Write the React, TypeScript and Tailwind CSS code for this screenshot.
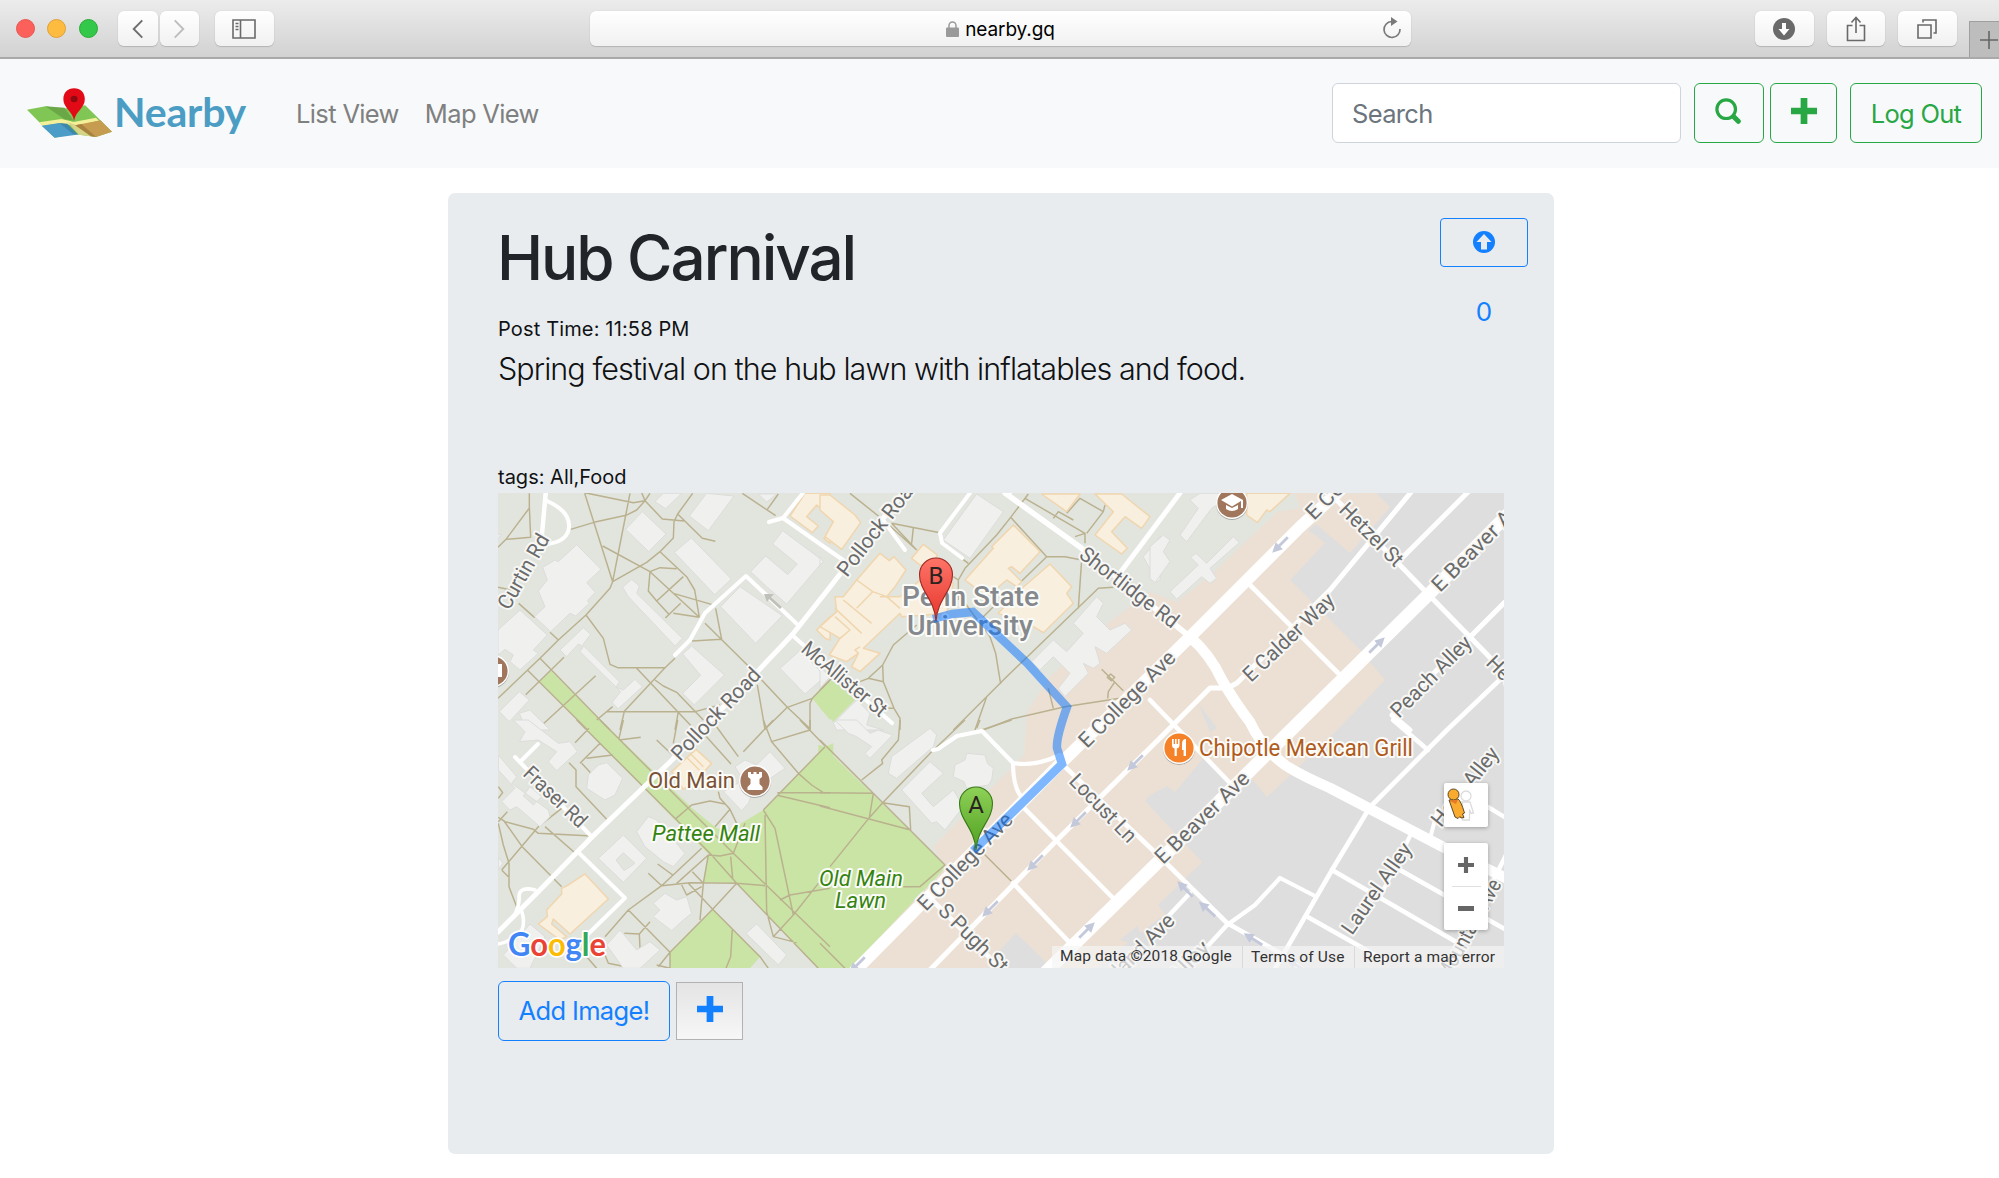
import React from "react";

type Pt = [number, number];

/* Map artwork is authored in 340x250 tiles at three units per pixel. */
const TILES: Record<string, Pt> = {
  nw: [490, 480],
  n: [820, 480],
  ne: [1150, 480],
  sw: [490, 720],
  s: [820, 720],
  se: [1150, 720],
};

const FOOTPATHS: [string, string][] = [
  ["nw", "M118 40L118 80L122 172L48 178L24 202M118 84L48 178M284 40L368 305M420 40L368 305M284 38L430 68L465 62L455 38M242 148L312 127L408 106L440 90L465 62L480 40M465 62L517 117L582 123M608 40L563 102L552 125L550 174L510 215L470 247L368 305L360 325L288 405L205 480L150 535L24 655M563 102L637 175L676 184M510 215L590 290L614 330L628 412M338 198L480 275L628 412M480 275L510 263L560 266M480 275L475 333L500 363L536 402M550 400L628 412M580 290L500 363M550 340L667 374M572 370L526 414M677 385L695 478L606 483M645 430L775 558M288 405L340 475L360 553L383 563L525 563M555 535L525 563L403 694L390 750M440 565L615 750M495 600L520 618L560 637L640 720M350 695L615 695L690 675M565 695L555 750M24 322L62 330M86 370L134 413M180 457L205 480M112 570L293 750M150 535L360 750M222 532L107 644M317 587L162 730M368 680L320 720M802 615L825 748L892 682L815 600M892 682L962 748M892 682L967 655L1020 600M967 655L960 670L960 750M757 40L857 107M865 42L832 88"],
  ["n", "M90 40L190 120L290 210M215 130L360 158M215 130L290 210M280 143L275 190M625 42L572 112L530 165L435 265L415 300L415 360M400 290L415 300M572 112L680 230L605 303M680 230L735 230L785 240L775 385M880 322L835 325L560 590L400 750M415 340L450 390L510 470L527 520L542 612M500 650L465 750M845 568L910 632M885 605L865 635L863 655M872 582L862 592L874 602L884 592ZM495 748L575 717L735 680L900 655M685 625L700 685M290 435L220 495L188 555L190 605L222 685L240 715L240 750M188 555L145 595M120 605L145 595L190 605M200 685L222 685M0 630L40 590M615 55L795 160L795 190M740 100L780 55L850 95L800 160M855 75L850 95M700 115L715 95L760 120M550 350L490 410M425 235L445 250M765 170L795 160"],
  ["sw", "M330 0L730 400L1020 680M260 0L660 400L740 490L985 745M387 55L400 0M387 60L452 52M297 25L255 68M330 70L270 130M290 115L368 105M237 128L258 150L258 200L350 298M275 130L303 160M500 60L545 103M550 70L563 0M640 40L723 132M665 0L745 110M850 0L760 95M820 0L845 65L960 30L960 0M930 0L1005 78M845 65L925 160L965 195L1000 218M1005 80L820 270M862 218L1020 218M862 226L1020 263M820 270L855 325L910 585M825 285L830 575L850 650L920 668M655 405L640 490L630 600M515 497L600 488L740 490L825 497M635 385L515 497L415 570L345 650M503 432L548 465M475 460L515 497M655 405L560 490M415 570L540 697L540 745L500 735M540 697L668 568L740 490M540 697L505 740M668 568L595 490M668 568L810 710L835 745M727 625L722 710L708 745M607 455L640 490M575 495L590 525L635 500M910 585L985 490M870 540L900 525L1020 505M910 585L850 650M655 405L690 408L730 400L765 310M722 410L728 475M555 298L605 255L660 243L705 252M685 215L690 235L720 268L675 320M720 268L740 310M25 292L45 305L130 328L145 340L305 348M52 275L25 305M25 310L40 375L57 430L57 500L80 560M215 265L145 320L35 450M40 300L98 382L215 500M165 320L262 405M25 200L38 218L25 235M35 450L55 470M403 640L448 642L480 605M448 642L450 685M345 705L355 730L395 738M290 710L320 745"],
  ["s", "M435 0L335 95L188 248L148 293L30 440M240 0L235 60L185 120L188 130L125 180M0 60L375 435L300 500L250 500M0 218L160 220L148 293M0 258L272 330L268 260L188 248M480 0L470 25M485 30L575 0M490 400L580 490M0 670L75 745"],
];

const LAWNS: [string, string][] = [
  ["nw", "M150 605L183 572L365 755L300 757ZM967 655L1020 600L1020 720Z"],
  ["n", "M0 640L40 595L105 660L40 725L0 685Z"],
  ["sw", "M255 -5L325 -5L610 268L680 325L720 330L820 270L1005 80L1030 70L1020 745L985 745L740 490L640 485L655 402ZM668 568L810 710L780 745L540 745L540 697Z"],
  ["s", "M0 75L14 82L375 435L370 450L90 745L-5 745L-5 75Z"],
];

const BUILDINGS: [string, string][] = [
  ["nw", "M457 95L528 162L476 215L407 148ZM495 65L520 40L575 40L527 86ZM650 40L732 48L655 152L598 108ZM604 174L724 297L674 344L553 217ZM260 194L333 268L290 308L316 337L292 362L298 370L257 408L240 400L182 455L134 410L165 380L145 333L172 300L158 262L195 240L205 245ZM90 390L172 465L130 510L145 520L90 570L60 545L70 525L45 508L24 525L24 450ZM398 322L425 298L448 318L440 340L577 475L555 498L415 350ZM210 510L280 443L302 463L278 495L388 605L378 622L400 630L435 598L457 620L385 686L366 668L392 635L270 515L280 500L265 492L230 530ZM878 152L1000 243L890 372L830 320L782 275L827 228L893 284L922 252L848 192ZM750 320L877 407L797 490L692 380ZM605 498L703 585L613 675L578 640L632 586L578 522ZM932 510L1005 590L945 642L870 565ZM88 635L118 660L58 725L28 695ZM88 700L120 690L180 750L110 750ZM805 42L860 42L830 66ZM20 165L34 162L22 180Z"],
  ["n", "M470 42L550 95L450 235L370 180ZM830 350L850 370L830 410L870 450L915 430L935 450L860 520L825 500L840 550L820 565L790 550L805 580L735 650L715 625L750 580L700 530L660 570L635 545L700 480L740 515L790 460L760 430ZM1020 170L970 230L1010 305L1020 300ZM0 560L30 590L0 625ZM40 730L110 660L150 700L140 735L190 750L50 750ZM0 230L10 245L0 255Z"],
  ["ne", "M120 60L150 40L215 40L200 75L185 85L110 185L90 165L145 85ZM250 170L268 188L180 265L200 295L180 310L155 290L80 358L60 335L145 255L122 232L138 220L170 250ZM0 200L40 165L60 180L40 215L60 245L15 308L0 295Z"],
  ["sw", "M115 0L205 70L240 65L262 95L200 152L175 125L200 95L145 60L88 65L105 35L70 0ZM350 128L398 175L375 225L345 240L290 205L295 165L325 135ZM25 105L80 170L65 190L175 270L180 290L150 320L80 260L60 270L35 245L75 205L25 150ZM120 200L100 228L130 255L155 230ZM475 290L500 300L585 400L550 440L520 425L465 380L440 335ZM400 345L470 415L400 487L325 415ZM400 398L378 420L402 452L435 430ZM525 520L560 540L590 530L605 580L580 600L545 632L490 590L510 570L490 550ZM390 630L440 690L480 665L510 690L450 745L400 745L350 675ZM120 612L165 650L120 745L80 745L40 705ZM800 612L890 705L865 735L768 640ZM840 95L885 145L790 210L775 250L755 272L700 215L760 180L735 140L765 120L800 135ZM25 410L38 430L25 450Z"],
  ["s", "M45 0L110 0L150 40L175 30L218 45L150 115L135 100L155 80L110 50L85 40ZM330 25L350 45L340 80L230 175L205 160L215 110ZM330 125L370 160L305 220L340 260L400 210L430 260L375 330L350 305L335 310L245 210ZM440 100L495 105L502 130L520 145L515 180L505 195L440 205L432 185L400 170L405 135L435 120Z"],
];

const HALLS: [string, string][] = [
  ["nw", "M945 40L1020 40L1020 108L980 75L950 110L985 138L967 158L900 108ZM1020 160L1002 175L1020 190ZM980 450L1020 410L1020 480L1005 475Z"],
  ["n", "M0 45L30 45L105 105L122 128L65 208L15 170L40 125L0 90ZM310 193L352 225L335 260L300 255L275 235ZM180 220L208 242L222 230L258 270L225 320L200 350L240 350L345 265L400 310L380 400L245 410L240 400L130 505L180 520L120 575L95 560L115 520L80 545L28 525L60 475L0 440L50 395L45 350L70 350L110 300ZM580 135L660 215L600 280L575 260L565 265L605 305L590 320L560 300L500 350L435 300L520 205L515 200ZM690 252L755 320L740 340L760 370L670 458L640 440L535 400L600 330ZM665 42L780 42L740 95ZM825 42L905 42L990 110L965 145L915 110L875 155L922 205L905 222L825 165L880 95Z"],
  ["ne", "M290 40L420 40L360 95L350 90L322 128L290 105Z"],
  ["sw", "M285 462L355 537L240 642L190 597L185 612L230 650L210 660L145 612L172 590L170 570L215 522L215 505L235 495ZM618 88L665 130L620 180L580 208L545 155Z"],
];

const HALL_LINES: [string, string][] = [
  ["n", "M110 300L158 335L200 350M180 350L200 350L240 385M70 360L155 430M45 385L125 460M60 475L90 450L45 410M158 335L110 385M120 500L105 510L115 520"],
  ["sw", "M600 100L640 140M590 112L630 152"],
];

/* [path, width] in page pixels */
const ROADS: [string, number][] = [
  ["M546 490L541 545", 4.5],
  ["M547 501Q570 511 569 527Q568 541 548 544", 4],
  ["M675 655L690 640L705 613L746 576L797 624", 4],
  ["M769 522L783 518L830 551L846 562", 4.2],
  ["M803 493L783 518", 4],
  ["M905 490L847 565L830 587L792 635L740 690L672 760L592 837L535 895L498 932", 5],
  ["M792 635L892 723", 4.2],
  ["M883 520L905 550", 4],
  ["M970 493L940 533L942 543L962 558", 4],
  ["M1005 493L1080 547L1190 637", 5.5],
  ["M1180 493L1120 573", 5],
  ["M1010 493L1000 487", 4],
  ["M578 852L625 898L585 937", 4],
  ["M515 757L592 837M538 744L520 762", 4],
  ["M535 890Q520 886 519 896Q520 905 514 916M522 912Q525 922 522 930Q512 942 498 944", 3.6],
  ["M1360 472L1300 527L1190 637L1061 763L850 976", 12],
  ["M1525 497L1430 593L1288 733L1150 870L1046 972", 13],
  ["M1190 637Q1210 654 1222 680Q1236 704 1250 722Q1262 748 1285 765Q1300 775 1330 788L1443 847L1510 880", 10.5],
  ["M1412 491L1330 590L1237 683L1228 688L1210 688L1160 738L1057 840L926 974", 5],
  ["M1330 493L1427 593L1470 637L1510 678", 5],
  ["M1469 491L1403 557", 5],
  ["M1510 597L1392 715L1410 730", 5],
  ["M1510 670L1447 730L1370 807L1332 870L1272 974", 4.6],
  ["M1393 720L1428 750", 4.6],
  ["M1248 583L1338 673", 4.6],
  ["M1150 700L1230 783", 4.6],
  ["M1061 763L1160 857L1227 923L1280 953L1306 972", 4.6],
  ["M1023 807L1113 898", 4.6],
  ["M1013 883L1070 943", 4.6],
  ["M930 898L1006 974", 4.6],
  ["M933 750L938 749L957 736L982 731L1013 763Q1035 767 1060 755M1013 763Q1013 785 1020 795", 4.2],
  ["M1332 870L1458 943", 4.6],
  ["M1227 925L1255 905L1280 878L1315 896", 4.2],
  ["M1306 916L1384 960", 4.6],
  ["M1400 870L1510 932", 4.6],
  ["M1410 836L1380 897M1431 835L1437 812", 4],
  ["M1488 807L1506 818", 4.4],
  ["M1506 855L1450 968", 4.4],
  ["M1190 893L1160 925M1227 925L1195 960", 4.4],
  ["M1488 868L1506 878", 6],
];

/* [x, y, heading in degrees] */
const ARROWS: [number, number, number][] = [
  [1280, 545, 135], [1377, 645, -45], [1135, 763, 135], [1078, 820, 135], [1035, 863, 135],
  [990, 909, 135], [1087, 930, -45], [857, 965, 135], [1185, 889, -135], [1207, 909, -138], [1253, 939, -148], [1296, 965, -148],
];

/* text, baseline start, baseline end */
const STREETS: [string, number, number, number, number][] = [
  ["Curtin Rd", 509, 611, 550, 539],
  ["Pollock Road", 680, 762, 762, 676],
  ["Pollock Road", 847, 578, 921, 483],
  ["McAllister St", 800, 651, 880, 718],
  ["Fraser Rd", 522, 775, 579, 829],
  ["Shortlidge Rd", 1078, 557, 1172, 629],
  ["E College Ave", 1314, 521, 1407, 428],
  ["Hetzel St", 1338, 511, 1395, 568],
  ["E Beaver Ave", 1440, 593, 1530, 503],
  ["E Calder Way", 1251, 683, 1336, 602],
  ["Peach Alley", 1399, 719, 1473, 644],
  ["Hetzel St", 1485, 664, 1542, 721],
  ["E College Ave", 1087, 749, 1177, 659],
  ["E College Ave", 926, 912, 1014, 821],
  ["Locust Ln", 1068, 782, 1128, 844],
  ["E Beaver Ave", 1163, 865, 1251, 780],
  ["S Pugh St", 937, 912, 1000, 974],
  ["Highland Ave", 1091, 1008, 1176, 922],
  ["Alley", 1177, 984, 1211, 949],
  ["Laurel Alley", 1352, 936, 1413, 849],
  ["Holly Alley", 1441, 828, 1500, 754],
  ["Mountain Ave", 1448, 982, 1502, 884],
];

function Tiles({ layers, fill = "none", stroke, width }: { layers: [string, string][]; fill?: string; stroke?: string; width?: number }) {
  return (
    <>
      {layers.map(([tile, d], i) => (
        <g key={i} transform={`translate(${TILES[tile][0]} ${TILES[tile][1]}) scale(0.33333)`}>
          <path d={d} fill={fill} stroke={stroke} strokeWidth={width} strokeLinejoin="round" fillRule="evenodd" />
        </g>
      ))}
    </>
  );
}

function Street({ item }: { item: [string, number, number, number, number] }) {
  const [text, x1, y1, x2, y2] = item;
  const angle = (Math.atan2(y2 - y1, x2 - x1) * 180) / Math.PI;
  const length = Math.hypot(x2 - x1, y2 - y1);
  return (
    <text
      transform={`translate(${x1} ${y1}) rotate(${angle})`}
      textLength={length}
      lengthAdjust="spacingAndGlyphs"
      fontSize="21"
      fill="#6b6b6b"
      stroke="#f7f7f5"
      strokeWidth="4"
      strokeLinejoin="round"
      paintOrder="stroke"
    >
      {text}
    </text>
  );
}

function Place({ x, y, w, size, fill, italic, bold, children }: { x: number; y: number; w: number; size: number; fill: string; italic?: boolean; bold?: boolean; children: string }) {
  return (
    <text x={x} y={y} textLength={w} lengthAdjust="spacingAndGlyphs" fontSize={size} fill={fill} fontStyle={italic ? "italic" : "normal"} fontWeight={bold ? 500 : 400} stroke="#fbfbf8" strokeWidth="4" strokeLinejoin="round" paintOrder="stroke">
      {children}
    </text>
  );
}

function Marker({ x, y, letter, from, to, edge }: { x: number; y: number; letter: string; from: string; to: string; edge: string }) {
  return (
    <g transform={`translate(${x} ${y})`}>
      <defs>
        <linearGradient id={`pin${letter}`} x1="0" y1="0" x2="0" y2="1">
          <stop offset="0" stopColor={from} />
          <stop offset="1" stopColor={to} />
        </linearGradient>
      </defs>
      <path d="M0 0C-1.5 -22 -16.5 -30 -16.5 -46.5A16.5 16.5 0 0 1 16.5 -46.5C16.5 -30 1.5 -22 0 0Z" fill={`url(#pin${letter})`} stroke={edge} strokeWidth="1.1" />
      <text x="0" y="-37" textAnchor="middle" fontSize="24" fill="#2b2320">{letter}</text>
    </g>
  );
}

function Poi({ x, y, fill, children }: { x: number; y: number; fill: string; children?: React.ReactNode }) {
  return (
    <g transform={`translate(${x} ${y})`}>
      <circle r="16" cy="1" fill="#000" opacity="0.25" />
      <circle r="16" fill="#fff" />
      <circle r="14.6" fill={fill} />
      {children}
    </g>
  );
}

function CampusMap() {
  return (
    <svg viewBox="498 493 1006 475" className="block h-full w-full font-['Roboto',sans-serif]">
      <rect x="498" y="493" width="1006" height="475" fill="#e2e4de" />
      <path d="M1293 490L1300 508L1277 512L1213 573L1177 602L1150 592L1103 627L1050 677L1027 712L1024 755L933 847L944 863L850 972L1506 972L1506 490Z" fill="#ece0d4" />
      <path d="M1373 490L1390 507L1350 553L1316 524L1308 530L1325 543L1290 580L1360 650L1385 680L1337 730L1267 797L1253 780L1230 783L1204 757L1175 792L1167 786L1150 795L1145 801L1202 862L1158 905L1165 914L1090 972L1506 972L1506 490Z" fill="#dedede" />
      <path d="M1016 933L1045 961L1045 972L990 972L1000 950ZM1137 926L1120 940L1150 950ZM1198 703L1217 728L1210 732Z" fill="#dedede" />
      <Tiles layers={LAWNS} fill="#cae4a5" />
      <Tiles layers={FOOTPATHS} stroke="#bab18f" width={4.4} />
      <Tiles layers={BUILDINGS} fill="#f0f0ef" stroke="#dcdddb" width={3} />
      <Tiles layers={HALLS} fill="#f8efde" stroke="#f0d6ae" width={4.5} />
      <Tiles layers={HALL_LINES} stroke="#f0d6ae" width={4.5} />
      {ROADS.map(([d, w], i) => (
        <path key={i} d={d} fill="none" stroke="#fff" strokeWidth={w} strokeLinejoin="round" strokeLinecap="round" />
      ))}
      {ARROWS.map(([x, y, a], i) => (
        <g key={i} transform={`translate(${x} ${y}) rotate(${a})`}>
          <path d="M-11 -1.4H1V-5L11 0L1 5V1.4H-11Z" fill="#c3c8da" />
        </g>
      ))}
      <path d="M764 594l3 8 2-3 11 10 2-2-11-10 3-3z" fill="#bfc0ba" />

      {STREETS.map((s, i) => (
        <Street key={i} item={s} />
      ))}
      <Place x={902} y={606} w={137} size={28} fill="#85898d" bold>Penn State</Place>
      <Place x={907} y={635} w={126} size={28} fill="#85898d" bold>University</Place>
      <Place x={648} y={788} w={87} size={22.5} fill="#7a5233">Old Main</Place>
      <Place x={652} y={841} w={108} size={22.5} fill="#34830f" italic>Pattee Mall</Place>
      <Place x={819} y={886} w={84} size={22.5} fill="#34830f" italic>Old Main</Place>
      <Place x={835} y={908} w={51} size={22.5} fill="#34830f" italic>Lawn</Place>
      <Place x={1199} y={756} w={214} size={23} fill="#b05a1c">Chipotle Mexican Grill</Place>

      <Poi x={1179} y={748} fill="#f58229">
        <path d="M-7-9v6q0 3 2.600 3.500V8h2.200V.5Q.5 0 .5-3v-6h-1.600v5h-1.300v-5h-1.600v5h-1.300v-5zM3-4q0-5 4-5V8H4.600V2H3z" fill="#fff" />
      </Poi>
      <Poi x={755} y={781} fill="#a0775c">
        <path d="M-7-9h3v2h2.500v-2h3v2H4v-2h3v5L4.500-2V3L7.500 6v3h-15V6l3-3v-5L-7-4z" fill="#fff" />
      </Poi>
      <Poi x={1232} y={503} fill="#a0775c">
        <path d="M-11-3L0-9L11-3V5H9V-2L0 3.500ZM-6 2L0 5L6 2V6Q0 10-6 6Z" fill="#fff" />
      </Poi>
      <Poi x={493} y={671} fill="#a0775c">
        <path d="M3-7h6V6H3z" fill="#fff" />
      </Poi>

      <path d="M933 619L952 614L973 612L1027 663L1067 707Q1056 738 1057 748L1062 764L973 851" fill="none" stroke="#0070ff" strokeOpacity="0.5" strokeWidth="8.500" />
      <Marker x={936} y={621} letter="B" from="#ff7468" to="#e5352c" edge="#9c2a22" />
      <Marker x={976} y={850} letter="A" from="#8fd158" to="#4ea020" edge="#3a7a17" />

      <text x="508" y="956" textLength="98" lengthAdjust="spacingAndGlyphs" fontSize="32" fontWeight="700" className="font-['Lato',sans-serif]" stroke="#fff" strokeWidth="3.500" strokeLinejoin="round" paintOrder="stroke">
        <tspan fill="#4285f4">G</tspan>
        <tspan fill="#ea4335">o</tspan>
        <tspan fill="#fbbc05">o</tspan>
        <tspan fill="#4285f4">g</tspan>
        <tspan fill="#34a853">l</tspan>
        <tspan fill="#ea4335">e</tspan>
      </text>
    </svg>
  );
}

function Plus({ className }: { className: string }) {
  return (
    <svg viewBox="0 0 24 24" className={className} fill="currentColor">
      <path d="M8.900 0h6.200v8.900H24v6.200h-8.900V24h-6.200v-8.900H0v-6.200h8.900z" />
    </svg>
  );
}

const chromeButton = "flex h-[35px] items-center justify-center rounded-[6px] bg-linear-to-b from-white to-[#f1f1f1] shadow-[0_1px_1px_#b4b4b4,0_0_1px_#bbb]";

function BrowserBar() {
  return (
    <div className="flex h-[59px] items-start border-b-2 border-[#a9a9a9] bg-linear-to-b from-[#ececed] to-[#d3d2d3] pt-[11px]">
      <div className="flex h-[35px] items-center gap-[12.500px] pl-[15.500px]">
        <span className="size-[19px] rounded-full border border-[#e9554f] bg-[#fc605b]" />
        <span className="size-[19px] rounded-full border border-[#dfa136] bg-[#fdbc40]" />
        <span className="size-[19px] rounded-full border border-[#27ac34] bg-[#34c84a]" />
      </div>
      <div className="ml-[20.500px] flex gap-[2px]">
        <div className={`${chromeButton} w-[39.500px]`}>
          <svg viewBox="0 0 14 22" className="h-[20px] w-[12px]" fill="none" stroke="#6d6d6d" strokeWidth="2.200"><path d="M12 1L2 11L12 21" /></svg>
        </div>
        <div className={`${chromeButton} w-[39.500px]`}>
          <svg viewBox="0 0 14 22" className="h-[20px] w-[12px]" fill="none" stroke="#bdbdbd" strokeWidth="2.200"><path d="M2 1L12 11L2 21" /></svg>
        </div>
      </div>
      <div className={`${chromeButton} ml-[16px] w-[58.500px]`}>
        <svg viewBox="0 0 24 20" className="h-[20px] w-[24px]" fill="none" stroke="#6a6a6a" strokeWidth="1.600"><path d="M1 1H23V19H1ZM8.500 1V19M3.500 4.500H6.500M3.500 7.500H6.500M3.500 10.500H6.500" /></svg>
      </div>
      <div className={`${chromeButton} relative ml-[316.500px] w-[821px] gap-[6px]`}>
        <svg viewBox="0 0 13 16" className="h-[16px] w-[13px]"><path d="M3 7V4.500a3.500 3.500 0 0 1 7 0V7" fill="none" stroke="#9a9a9a" strokeWidth="1.500" /><rect y="6.500" width="13" height="9.500" rx="1" fill="#9a9a9a" /></svg>
        <span className="pt-px text-[19px] leading-none tracking-[-0.100px] text-black">nearby.gq</span>
        <svg viewBox="0 0 20 24" className="absolute top-[5px] right-[9px] h-[24px] w-[20px]"><path d="M9.500 5.500A8 8 0 1 0 18 13" fill="none" stroke="#7a7a7a" strokeWidth="1.700" /><path d="M9 1L15.500 5.500L9 10Z" fill="#7a7a7a" /></svg>
      </div>
      <div className="ml-[344px] flex gap-[13px]">
        <div className={`${chromeButton} w-[58.500px]`}>
          <svg viewBox="0 0 22 22" className="size-[22px]"><circle cx="11" cy="11" r="11" fill="#6a6a6a" /><path d="M9 5h4v6h3.500L11 17.500L5.500 11H9z" fill="#fff" /></svg>
        </div>
        <div className={`${chromeButton} w-[58.500px]`}>
          <svg viewBox="0 0 20 26" className="h-[26px] w-[20px]" fill="none" stroke="#6a6a6a" strokeWidth="1.600"><path d="M6.500 9.500H1.500V24.500H18.500V9.500H13.500M10 17V2M5.500 6.500L10 1.500L14.500 6.500" /></svg>
        </div>
        <div className={`${chromeButton} w-[58.500px]`}>
          <svg viewBox="0 0 20 20" className="size-[20px]" fill="none" stroke="#6a6a6a" strokeWidth="1.600"><path d="M1 6H14V19H1ZM6 3.500V1H19V14H16.500" /></svg>
        </div>
      </div>
      <div className="mt-[10px] ml-auto flex h-[36px] w-[30px] items-center justify-end border-t border-l border-[#9f9f9f] bg-[#bdbdbe]">
        <svg viewBox="0 0 18 18" className="mr-[1px] size-[18px] shrink-0" stroke="#666" strokeWidth="1.600"><path d="M9 0V18M0 9H18" /></svg>
      </div>
    </div>
  );
}

function Logo() {
  return (
    <div className="flex items-center">
      <svg viewBox="70 264 222 150" preserveAspectRatio="none" className="h-[50px] w-[85px]">
        <path d="M70 329L118 319L160 327L222 316L292 395L250 411L192 402L142 413Z" fill="#80c655" />
        <path d="M118 319L168 323L192 362L168 358Z" fill="#6aa746" />
        <path d="M102 367L160 357L192 366L250 353L258 362L200 378L155 370L110 378Z" fill="#f4f09a" />
        <path d="M108 377L155 369L200 404L142 413Z" fill="#4b9dc8" />
        <path d="M155 369L175 371L204 404L190 402Z" fill="#3f86ab" />
        <path d="M175 366L196 374L236 409L206 404Z" fill="#d8d487" />
        <path d="M196 376L262 361L292 395L250 411L238 409Z" fill="#c69c50" />
        <path d="M196 376L212 372L250 410L238 409Z" fill="#a8823f" />
        <path d="M193 363C190 335 165 325 165 298C165 278 176 265 193 265S221 278 221 298C221 325 196 335 193 363Z" fill="#e20a17" />
        <ellipse cx="193" cy="297" rx="9" ry="10" fill="#8e0a10" />
      </svg>
      <span className="-mt-[3px] ml-[2px] font-['Lato',sans-serif] text-[41px] leading-[50px] font-bold tracking-[-0.200px] text-[#4b9dc4]">Nearby</span>
    </div>
  );
}

function NavBar() {
  return (
    <nav className="flex h-[109px] items-center bg-[#f8f9fa] pr-[17px] pb-[1px] pl-[27px] text-[25.500px] tracking-[-0.650px]">
      <Logo />
      <div className="mt-[2px] ml-[50px] flex gap-[26px] text-[#7f8080]">
        <span>List View</span>
        <span>Map View</span>
      </div>
      <div className="ml-auto flex h-[60px] items-stretch">
        <div className="flex w-[349px] items-center rounded-[6px] border-[1.500px] border-[#ced4da] bg-white pt-[2px] pl-[19px] text-[#6c757d]">Search</div>
        <button className="ml-[13px] flex w-[70px] items-center justify-center rounded-[6px] border-[1.500px] border-[#28a745] text-[#28a745]">
          <svg viewBox="0 0 26 26" className="-mt-[4px] -ml-[3px] size-[26px]" fill="none" stroke="currentColor"><circle cx="11.200" cy="11.200" r="9.300" strokeWidth="3.200" /><path d="M18.500 18.500L23.300 23.300" strokeWidth="5" strokeLinecap="round" /></svg>
        </button>
        <button className="ml-[6px] flex w-[67px] items-center justify-center rounded-[6px] border-[1.500px] border-[#28a745] text-[#28a745]">
          <Plus className="-mt-[4px] size-[26px]" />
        </button>
        <button className="ml-[13px] flex w-[132px] items-center justify-center rounded-[6px] border-[1.500px] border-[#28a745] pt-[2px] tracking-[-0.700px] text-[#28a745]">Log Out</button>
      </div>
    </nav>
  );
}

function MapControls() {
  return (
    <div className="absolute top-[290px] right-[16px] flex w-[44px] flex-col gap-[16px]">
      <div className="h-[44px] rounded-[2px] bg-white shadow-[0_1px_4px_rgba(0,0,0,0.3)]">
        <svg viewBox="0 0 44 44" className="size-[44px]">
          <g fill="#fff" stroke="#dcdcdc" strokeWidth="1.300"><circle cx="22" cy="13" r="5" /><path d="M18 19h8l3.500 11-2.500.500-1.500-4V37h-7V20z" /></g>
          <g fill="#f8ab2e" stroke="#4b3a1c" strokeWidth="0.900"><path d="M5 17L14 16Q17 18 20.500 30L18.500 31L20 34.500L17 35L16 33.500L14 35.500L11 34Z" /><circle cx="9.500" cy="11.500" r="5.500" /></g>
          <path d="M5.500 18L14 16.500L12 21Z" fill="#e8792a" />
        </svg>
      </div>
      <div className="flex h-[87px] flex-col items-center rounded-[2px] bg-white text-[#666] shadow-[0_1px_4px_rgba(0,0,0,0.3)]">
        <div className="flex h-[43px] items-center"><Plus className="size-[16px]" /></div>
        <div className="h-px w-[29px] bg-[#e0e0e0]" />
        <div className="flex h-[43px] items-center"><div className="h-[5px] w-[16px] bg-[#666]" /></div>
      </div>
    </div>
  );
}

function EventCard() {
  return (
    <main className="mt-[25px] ml-[448px] h-[961px] w-[1106px] rounded-[7px] bg-[#e9ecef] pt-[25px] pr-[26px] pl-[50px]">
      <div className="flex h-[275px] justify-between">
        <div className="flex flex-col">
          <h1 className="mt-[2px] -ml-px text-[62px] leading-[76px] font-medium tracking-[-2.050px] text-[#212529]">Hub Carnival</h1>
          <p className="mt-[19px] text-[20px] leading-[28px] tracking-[0.150px] text-[#101214]">Post Time: 11:58 PM</p>
          <p className="mt-[3px] text-[30.500px] leading-[46px] font-light tracking-[-0.920px] text-[#101214]">Spring festival on the hub lawn with inflatables and food.</p>
          <p className="mt-auto mb-[2px] text-[20px] leading-[28px] text-[#101214]">tags: All,Food</p>
        </div>
        <div className="flex w-[88px] flex-col items-center text-[#1380ff]">
          <button className="flex h-[49px] w-full items-center justify-center rounded-[4px] border-[1.500px] border-[#1380ff]">
            <svg viewBox="0 0 22 22" className="-mt-px size-[22px]"><circle cx="11" cy="11" r="11" fill="currentColor" /><path d="M11 3L18.500 11H14V18.500H8V11H3.500Z" fill="#e9ecef" /></svg>
          </button>
          <span className="mt-[26px] text-[26px] leading-[38px]">0</span>
        </div>
      </div>
      <div className="relative h-[475px] w-[1006px] overflow-hidden">
        <CampusMap />
        <MapControls />
        <div className="absolute right-0 bottom-0 flex h-[22px] items-center bg-[#f5f5f5]/70 font-['Roboto',sans-serif] text-[15.500px] tracking-[0.150px] text-[#333]">
          <span className="w-[190px] pl-[8px] whitespace-nowrap">Map data ©2018 Google</span>
          <span className="h-full w-[112px] border-l border-[#dadada] pl-[8px] leading-[22px] whitespace-nowrap">Terms of Use</span>
          <span className="h-full w-[150px] border-l border-[#dadada] pl-[8px] leading-[22px] whitespace-nowrap">Report a map error</span>
        </div>
      </div>
      <div className="mt-[13px] flex items-center gap-[6px] text-[#1380ff]">
        <button className="flex h-[60px] w-[172px] items-center justify-center rounded-[6px] border-[1.500px] border-[#1380ff] pt-px text-[25.500px] tracking-[-0.650px]">Add Image!</button>
        <button className="flex h-[58px] w-[67px] items-center justify-center border-[1.500px] border-[#b2b2b2] bg-linear-to-b from-[#e4e4e4] to-[#f7f7f7]">
          <Plus className="-mt-[4px] size-[26px]" />
        </button>
      </div>
    </main>
  );
}

export default function App() {
  return (
    <div className="h-[1178px] w-[1999px] overflow-hidden bg-white font-['Inter',sans-serif]">
      <BrowserBar />
      <NavBar />
      <EventCard />
    </div>
  );
}
